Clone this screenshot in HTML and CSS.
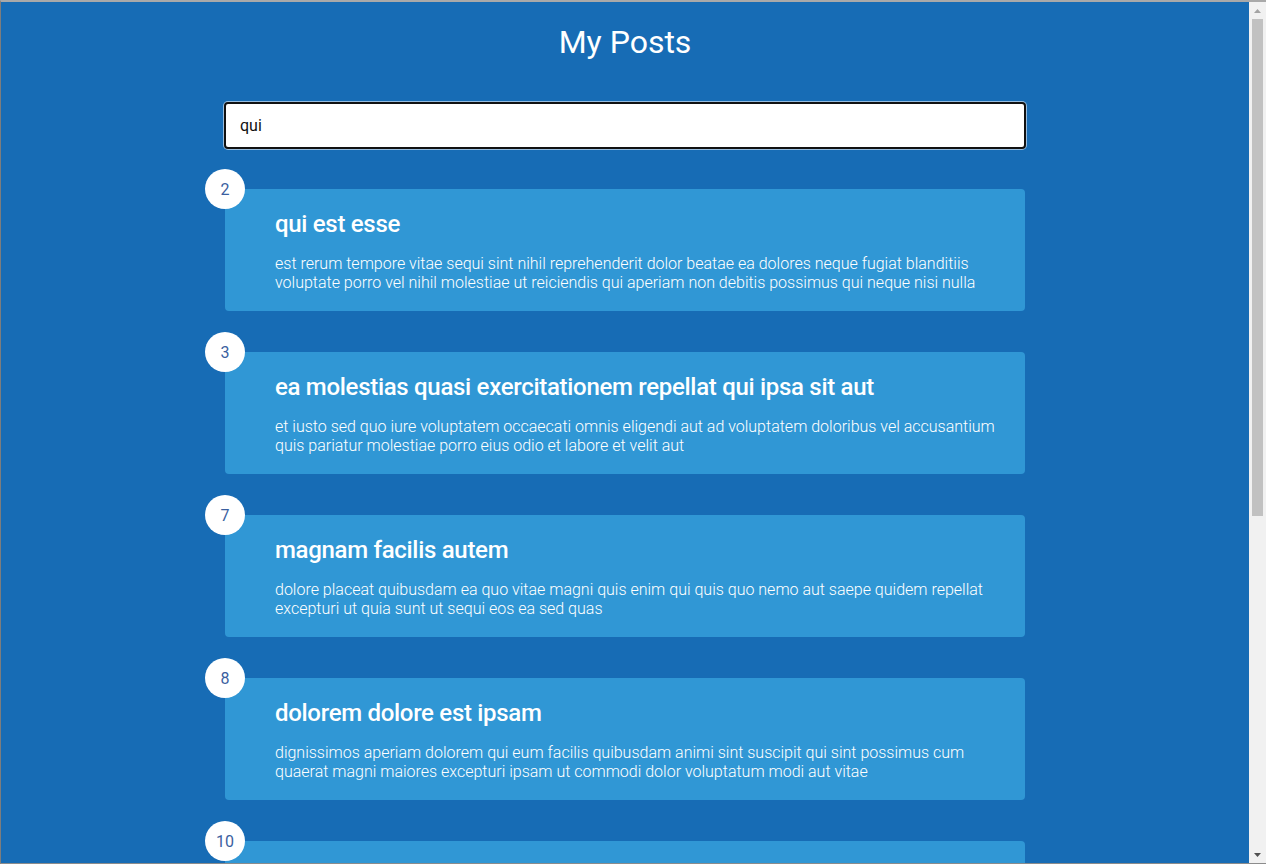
FILE: index.html
```html
<!DOCTYPE html>
<html lang="en">
<head>
<meta charset="utf-8">
<title>My Posts</title>
<link rel="stylesheet" href="styles.css">
</head>
<body>
<div class="frame">
<div class="viewport">
<div class="app">
  <h1 class="page-title">My Posts</h1>
  <input class="filter" type="text" value="qui">
  <div class="posts">
    <div class="post">
      <div class="post-num">2</div>
      <div class="post-card">
        <h2 class="post-title">qui est esse</h2>
        <p class="post-body">est rerum tempore vitae sequi sint nihil reprehenderit dolor beatae ea dolores neque fugiat blanditiis voluptate porro vel nihil molestiae ut reiciendis qui aperiam non debitis possimus qui neque nisi nulla</p>
      </div>
    </div>
    <div class="post">
      <div class="post-num">3</div>
      <div class="post-card">
        <h2 class="post-title">ea molestias quasi exercitationem repellat qui ipsa sit aut</h2>
        <p class="post-body">et iusto sed quo iure voluptatem occaecati omnis eligendi aut ad voluptatem doloribus vel accusantium quis pariatur molestiae porro eius odio et labore et velit aut</p>
      </div>
    </div>
    <div class="post">
      <div class="post-num">7</div>
      <div class="post-card">
        <h2 class="post-title">magnam facilis autem</h2>
        <p class="post-body">dolore placeat quibusdam ea quo vitae magni quis enim qui quis quo nemo aut saepe quidem repellat excepturi ut quia sunt ut sequi eos ea sed quas</p>
      </div>
    </div>
    <div class="post">
      <div class="post-num">8</div>
      <div class="post-card">
        <h2 class="post-title">dolorem dolore est ipsam</h2>
        <p class="post-body">dignissimos aperiam dolorem qui eum facilis quibusdam animi sint suscipit qui sint possimus cum quaerat magni maiores excepturi ipsam ut commodi dolor voluptatum modi aut vitae</p>
      </div>
    </div>
    <div class="post">
      <div class="post-num">10</div>
      <div class="post-card">
        <h2 class="post-title">optio molestias id quia eum</h2>
        <p class="post-body">quo et expedita modi cum officia vel magni doloribus qui repudiandae vero nisi sit quos veniam quod sed accusamus veritatis error</p>
      </div>
    </div>
  </div>
</div>
</div>
<div class="scrollbar">
  <div class="sb-btn">
    <svg width="7" height="4" viewBox="0 0 7 4"><polygon points="0,4 3.5,0 7,4" fill="#a3a3a3"/></svg>
  </div>
  <div class="sb-track"><div class="sb-thumb"></div></div>
  <div class="sb-btn">
    <svg width="7" height="4" viewBox="0 0 7 4"><polygon points="0,0 7,0 3.5,4" fill="#505050"/></svg>
  </div>
</div>
</div>
</body>
</html>
```

FILE: styles.css
```css
html, body {
  margin: 0;
  padding: 0;
  height: 100%;
  overflow: hidden;
}

body {
  background: #176cb5;
  font-family: Roboto, "Liberation Sans", sans-serif;
  color: #fff;
}

.frame {
  box-sizing: border-box;
  height: 100vh;
  display: flex;
  border-top: 2px solid #a9a9a9;
  border-left: 1px solid #7d7d7d;
  border-bottom: 1px solid #8c8c8c;
}

.viewport {
  flex: 1;
  min-width: 0;
  overflow: hidden;
}

.scrollbar {
  width: 17px;
  flex: none;
  display: flex;
  flex-direction: column;
  background: #f1f1f1;
}

.sb-btn {
  height: 17px;
  flex: none;
  display: flex;
  align-items: center;
  justify-content: center;
}

.sb-btn svg {
  display: block;
}

.sb-track {
  flex: 1;
  padding: 0 3px 0 3px;
}

.sb-thumb {
  height: 497px;
  background: #c1c1c1;
}

.app {
  width: 800px;
  margin: 0 auto;
  padding: 20px 0 0;
  display: flex;
  flex-direction: column;
}

.page-title {
  margin: 0 0 40px;
  text-align: center;
  font-size: 32px;
  font-weight: 400;
  line-height: 40px;
}

.filter {
  box-sizing: border-box;
  width: 802px;
  margin-left: -1px;
  height: 47px;
  padding: 12px 14px;
  border: 2px solid #111;
  border-radius: 4px;
  box-shadow: 0 0 0 1px rgba(255,255,255,0.55);
  background: #fff;
  color: #111;
  font-family: Roboto, "Liberation Sans", sans-serif;
  font-size: 16px;
  outline: none;
}

.posts {
  display: flex;
  flex-direction: column;
  gap: 41px;
  margin-top: 40px;
}

.post {
  position: relative;
}

.post-num {
  position: absolute;
  left: -20px;
  top: -20px;
  width: 40px;
  height: 40px;
  border-radius: 50%;
  background: #fff;
  color: #3b5f9f;
  font-size: 16px;
  display: flex;
  align-items: center;
  justify-content: center;
}

.post-card {
  background: #3097d5;
  border-radius: 4px;
  padding: 21px 30px 19px 50px;
}

.post-title {
  margin: 0 0 16px;
  font-size: 24px;
  font-weight: 500;
  letter-spacing: -0.3px;
  line-height: 28px;
}

.post-body {
  margin: 0;
  font-size: 16px;
  font-weight: 300;
  line-height: 19px;
}
```
